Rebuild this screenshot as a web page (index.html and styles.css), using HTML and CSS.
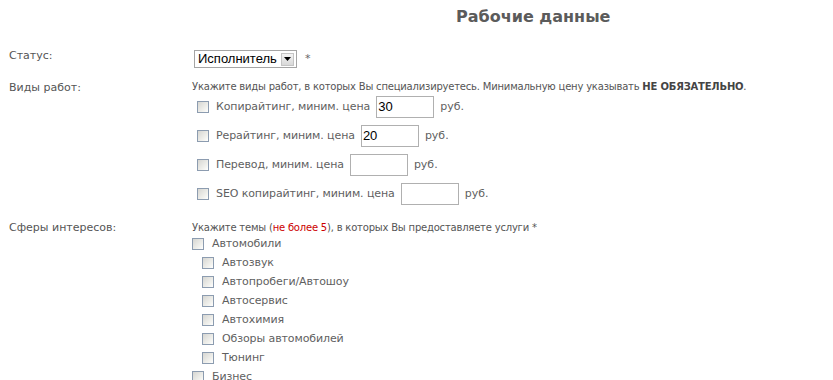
FILE: index.html
```html
<!DOCTYPE html>
<html lang="ru">
<head>
<meta charset="utf-8">
<title>Рабочие данные</title>
<link rel="stylesheet" href="styles.css">
</head>
<body>
<div class="page">
  <h2 class="title">Рабочие данные</h2>

  <div class="row row-status">
    <div class="label">Статус:</div>
    <div class="field field-inline">
      <div class="select">
        <span class="select-value">Исполнитель</span>
        <span class="select-btn"><svg width="7" height="4" viewBox="0 0 7 4"><path d="M0 0H7L3.5 4Z" fill="#000"/></svg></span>
      </div>
      <span class="req">*</span>
    </div>
  </div>

  <div class="row row-works">
    <div class="label">Виды работ:</div>
    <div class="field">
      <div class="hint">Укажите виды работ, в которых Вы специализируетесь. Минимальную цену указывать <b>НЕ ОБЯЗАТЕЛЬНО</b>.</div>
      <div class="work"><span class="cb"></span><span class="opt">Копирайтинг, миним. цена</span><span class="price">30</span><span class="rub">руб.</span></div>
      <div class="work"><span class="cb"></span><span class="opt">Рерайтинг, миним. цена</span><span class="price">20</span><span class="rub">руб.</span></div>
      <div class="work"><span class="cb"></span><span class="opt">Перевод, миним. цена</span><span class="price"></span><span class="rub">руб.</span></div>
      <div class="work"><span class="cb"></span><span class="opt">SEO копирайтинг, миним. цена</span><span class="price"></span><span class="rub">руб.</span></div>
    </div>
  </div>

  <div class="row row-topics">
    <div class="label">Сферы интересов:</div>
    <div class="field">
      <div class="hint hint-topics">Укажите темы (<span class="red">не более 5</span>), в которых Вы предоставляете услуги *</div>
      <div class="topic"><span class="cb"></span><span class="opt">Автомобили</span></div>
      <div class="topic sub"><span class="cb"></span><span class="opt">Автозвук</span></div>
      <div class="topic sub"><span class="cb"></span><span class="opt">Автопробеги/Автошоу</span></div>
      <div class="topic sub"><span class="cb"></span><span class="opt">Автосервис</span></div>
      <div class="topic sub"><span class="cb"></span><span class="opt">Автохимия</span></div>
      <div class="topic sub"><span class="cb"></span><span class="opt">Обзоры автомобилей</span></div>
      <div class="topic sub"><span class="cb"></span><span class="opt">Тюнинг</span></div>
      <div class="topic"><span class="cb"></span><span class="opt">Бизнес</span></div>
    </div>
  </div>
</div>
</body>
</html>
```

FILE: styles.css
```css
html, body {
  margin: 0;
  padding: 0;
  background: #fff;
}
body {
  font-family: "DejaVu Sans", Verdana, sans-serif;
  color: #555;
  overflow: hidden;
}
.page {
  padding: 0 0 0 9px;
}
.title {
  margin: 7px 0 0 447px;
  font-size: 16px;
  line-height: 20px;
  font-weight: bold;
  color: #5b5b5b;
}
.row {
  display: flex;
}
.label {
  width: 183px;
  flex: none;
  font-size: 11px;
  line-height: 14px;
  color: #555;
}
.field {
  display: flex;
  flex-direction: column;
}
.row-status {
  margin-top: 21px;
  height: 33px;
}
.row-status .label {
  padding-top: 1px;
}
.field-inline {
  flex-direction: row;
  align-items: flex-start;
  padding-top: 2px;
}
.select {
  display: flex;
  align-items: center;
  width: 101px;
  height: 16px;
  border: 1px solid #a5a5a5;
  margin-left: 2px;
  background: #fff;
}
.select-value {
  flex: 1;
  font-family: "Liberation Sans", Arial, sans-serif;
  font-size: 13px;
  color: #000;
  padding-left: 3px;
  line-height: 16px;
}
.select-btn {
  width: 13px;
  height: 13px;
  margin-right: 2px;
  display: flex;
  align-items: center;
  justify-content: center;
  background: linear-gradient(#f4f4f4, #d8d8d8);
  border: 1px solid #c4c4c4;
  box-sizing: border-box;
}
.req {
  font-size: 11px;
  margin-left: 8px;
  line-height: 14px;
  padding-top: 2px;
  color: #666;
}
.hint {
  font-size: 10px;
  line-height: 12px;
  height: 11px;
  color: #555;
  white-space: nowrap;
  letter-spacing: -0.2px;
}
.hint b {
  color: #444;
}
.red {
  color: #c00;
}
.work {
  display: flex;
  align-items: center;
  height: 29px;
  padding-left: 5px;
}
.cb {
  width: 10px;
  height: 10px;
  flex: none;
  border: 1px solid #8c9cb0;
  background: linear-gradient(135deg, #d6d6d2 0%, #f2f2ee 70%, #fff 100%);
}
.opt {
  font-size: 11px;
  color: #5f5f5f;
  margin-left: 7px;
  white-space: nowrap;
  letter-spacing: -0.1px;
}
.price {
  width: 55px;
  height: 20px;
  border: 1px solid #b0b0b0;
  margin-left: 6px;
  font-family: "Liberation Sans", Arial, sans-serif;
  font-size: 13px;
  line-height: 20px;
  color: #000;
  padding-left: 1px;
  box-sizing: content-box;
}
.rub {
  font-size: 11px;
  color: #5f5f5f;
  margin-left: 6px;
}
.row-topics {
  margin-top: 13px;
}
.hint-topics {
  height: 13px;
  line-height: 13px;
}
.topic {
  display: flex;
  align-items: center;
  height: 19px;
}
.topic.sub {
  padding-left: 10px;
}
.topic .opt {
  margin-left: 8px;
}
```
